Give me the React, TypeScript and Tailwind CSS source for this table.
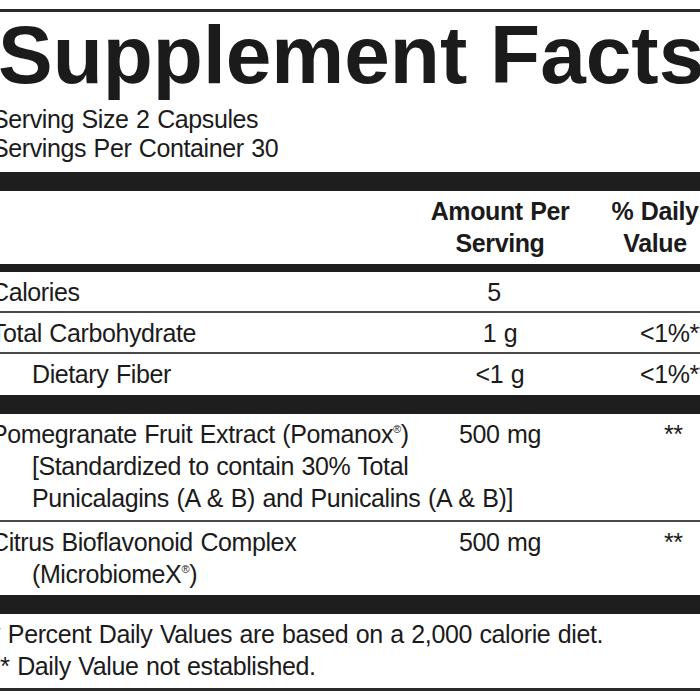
import React from "react";

const body = "font-['Liberation_Sans',Arial,sans-serif]";

function Rule({ kind }: { kind?: "bar" | "mid" }) {
  if (kind === "bar") return <div className="h-[19px] bg-[#1e1e1e]" />;
  if (kind === "mid") return <div className="h-[8px] bg-[#1e1e1e]" />;
  return <div className="h-[2px] bg-[#4a4a4a]" />;
}

function Row({
  name,
  amount,
  dv,
  indent,
  amountClass = "",
  dvClass = "",
  last,
}: {
  name: React.ReactNode;
  amount: string;
  dv?: string;
  indent?: boolean;
  amountClass?: string;
  dvClass?: string;
  last?: boolean;
}) {
  return (
    <div className={`grid grid-cols-[439px_140px_1fr] pt-[4px] ${last ? "pb-[5px]" : "pb-[3px]"}`}>
      <div className={`whitespace-nowrap ${indent ? "pl-[41px]" : ""}`}>{name}</div>
      <div className={`text-center ${amountClass}`}>{amount}</div>
      <div className={`whitespace-nowrap ${dvClass}`}>{dv}</div>
    </div>
  );
}

function Reg() {
  return <sup className="text-[11px] -top-[10px]">®</sup>;
}

export default function App() {
  return (
    <div className="w-[700px] h-[700px] overflow-hidden bg-white pt-[9px]">
      <div
        className={`-ml-[9px] w-[745px] border-t-[3px] border-[#2a2a2a] text-[#1b1b1b] ${body} text-[25px] leading-[32px] tracking-[-0.4px] [word-spacing:1px]`}
      >
        {/* title block */}
        <div className="pt-[2px] pb-[9px]">
          <h1 className="font-bold text-[82px] leading-[81px] tracking-normal [word-spacing:0px] pl-[7px] whitespace-nowrap">
            Supplement Facts
          </h1>
          <div className="mt-[10px] pl-[1px] leading-[29px]">
            <p>Serving Size 2 Capsules</p>
            <p>Servings Per Container 30</p>
          </div>
        </div>

        <Rule kind="bar" />

        <div className="grid grid-cols-[439px_140px_1fr] pt-[4px] pb-[5px] font-bold">
          <div />
          <div className="text-center whitespace-nowrap">
            Amount Per
            <br />
            Serving
          </div>
          <div className="w-[162px] pl-[8px] text-center whitespace-nowrap">
            % Daily
            <br />
            Value
          </div>
        </div>

        <Rule kind="mid" />
        <Row name="Calories" amount="5" amountClass="pr-[12px]" />
        <Rule />
        <Row name="Total Carbohydrate" amount="1 g" dv="<1%**" dvClass="pl-[70px]" />
        <Rule />
        <Row name="Dietary Fiber" amount="<1 g" dv="<1%**" dvClass="pl-[70px]" indent last />
        <Rule kind="bar" />

        <div className="grid grid-cols-[439px_140px_1fr] pt-[4px] pb-[6px]">
          <div className="whitespace-nowrap">
            <p>
              Pomegranate Fruit Extract (Pomanox<Reg />)
            </p>
            <p className="pl-[41px]">[Standardized to contain 30% Total</p>
            <p className="pl-[41px]">Punicalagins (A &amp; B) and Punicalins (A &amp; B)]</p>
          </div>
          <div className="text-center">500 mg</div>
          <div className="pl-[94px]">**</div>
        </div>
        <Rule />
        <div className="grid grid-cols-[439px_140px_1fr] pt-[4px] pb-[5px]">
          <div className="whitespace-nowrap">
            <p>Citrus Bioflavonoid Complex</p>
            <p className="pl-[41px]">
              (MicrobiomeX<Reg />)
            </p>
          </div>
          <div className="text-center">500 mg</div>
          <div className="pl-[94px]">**</div>
        </div>
        <Rule kind="bar" />

        <div className="pt-[4px] pb-[6px] whitespace-nowrap">
          <p>* Percent Daily Values are based on a 2,000 calorie diet.</p>
          <p>** Daily Value not established.</p>
        </div>
        <div className="h-[3px] bg-[#2a2a2a]" />
      </div>
    </div>
  );
}
